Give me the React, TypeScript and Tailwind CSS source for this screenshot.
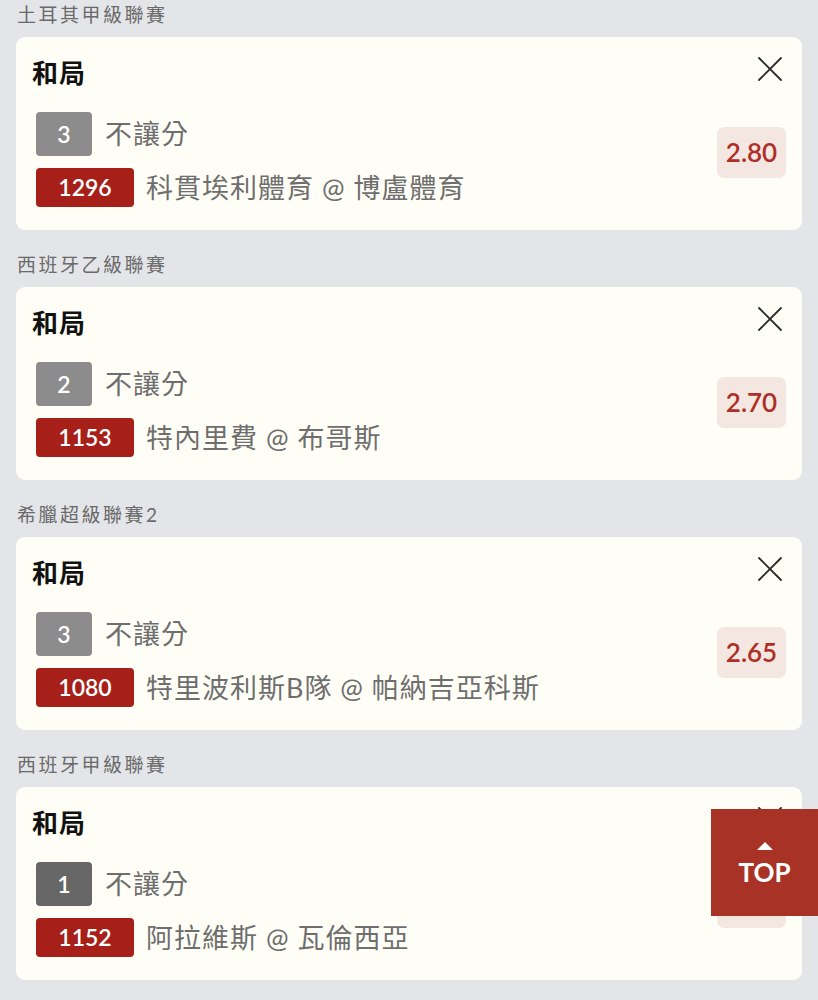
type Bet = {
  league: string;
  pick: string;
  seq: number;
  seqTone: "light" | "dark";
  matchNo: string;
  match: string;
  odds: string;
};

const bets: Bet[] = [
  {
    league: "土耳其甲級聯賽",
    pick: "和局",
    seq: 3,
    seqTone: "light",
    matchNo: "1296",
    match: "科貫埃利體育 @ 博盧體育",
    odds: "2.80"
  },
  {
    league: "西班牙乙級聯賽",
    pick: "和局",
    seq: 2,
    seqTone: "light",
    matchNo: "1153",
    match: "特內里費 @ 布哥斯",
    odds: "2.70"
  },
  {
    league: "希臘超級聯賽2",
    pick: "和局",
    seq: 3,
    seqTone: "light",
    matchNo: "1080",
    match: "特里波利斯B隊 @ 帕納吉亞科斯",
    odds: "2.65"
  },
  {
    league: "西班牙甲級聯賽",
    pick: "和局",
    seq: 1,
    seqTone: "dark",
    matchNo: "1152",
    match: "阿拉維斯 @ 瓦倫西亞",
    odds: "2.00"
  }
];

const font = "font-['Lato','Noto_Sans_CJK_TC',sans-serif]";

function CloseIcon() {
  return (
    <svg width="24" height="24" viewBox="0 0 24 24" fill="none" stroke="#2a2a2a" strokeWidth="1.8" strokeLinecap="round">
      <path d="M1 1L23 23M23 1L1 23" />
    </svg>
  );
}

function BetCard({ bet, first }: { bet: Bet; first: boolean }) {
  return (
    <section>
      <h3
        className={`${first ? "pt-[4px] pb-[11px]" : "pt-[24px] pb-[11px]"} pl-px text-[19px] leading-[22px] tracking-[2.5px] text-[#6a6a6a]`}
      >
        {bet.league}
      </h3>
      <div className="rounded-[9px] bg-[#fffef6] pt-5 pb-[23px]">
        <div className="flex h-8 items-start justify-between pl-4 pr-5">
          <span className="text-[26px] font-bold leading-8 tracking-[1px] text-[#111]">{bet.pick}</span>
          <CloseIcon />
        </div>
        <div className="mt-[23px] flex items-start justify-between pl-5 pr-4">
          <div>
            <div className="flex h-[44px] items-center gap-[13px]">
              <span
                className={`flex h-[44px] w-[56px] items-center justify-center rounded-[4px] text-[23px] font-semibold text-white ${
                  bet.seqTone === "dark" ? "bg-[#676767]" : "bg-[#8c8c8c]"
                }`}
              >
                {bet.seq}
              </span>
              <span className="text-[27px] leading-[36px] tracking-[1px] text-[#6e6e6e]">不讓分</span>
            </div>
            <div className="mt-3 flex h-[39px] items-center gap-3">
              <span className="flex h-[39px] w-[98px] items-center justify-center rounded-[4px] bg-[#a61f18] text-[23px] font-semibold text-white">
                {bet.matchNo}
              </span>
              <span className="text-[27px] leading-[36px] tracking-[1px] text-[#6e6e6e]">{bet.match}</span>
            </div>
          </div>
          <div className="mt-[15px] flex h-[51px] w-[69px] items-center justify-center rounded-[7px] bg-[#f4e6e0] text-[26px] font-semibold text-[#ad2f27]">
            {bet.odds}
          </div>
        </div>
      </div>
    </section>
  );
}

export default function App() {
  return (
    <div className={`${font} min-h-screen bg-[#e4e5e9] px-4 pb-5`}>
      {bets.map((bet, i) => (
        <BetCard key={bet.matchNo} bet={bet} first={i === 0} />
      ))}
      <button className="fixed right-0 top-[809px] flex h-[107px] w-[107px] flex-col items-center justify-center bg-[#a93226] text-white">
        <svg width="16" height="8" viewBox="0 0 16 8" className="mb-[11px]">
          <path d="M8 0L16 8H0Z" fill="white" />
        </svg>
        <span className="text-[26px] font-bold leading-[22px]">TOP</span>
      </button>
    </div>
  );
}
